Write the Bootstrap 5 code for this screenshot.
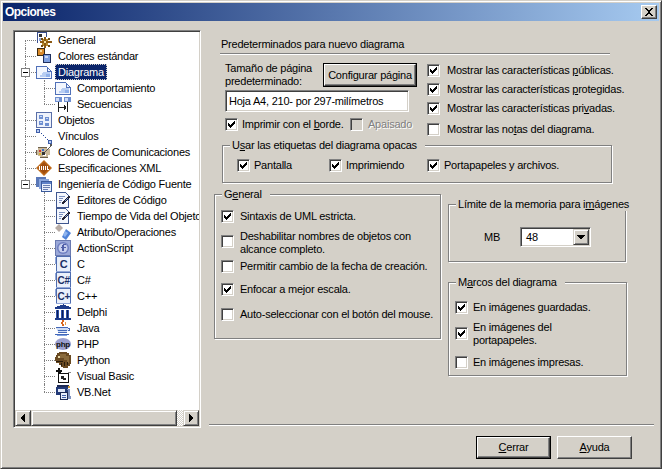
<!DOCTYPE html>
<html lang="es">
<head>
<meta charset="UTF-8" />
<title>Opciones</title>
<link href="https://cdn.jsdelivr.net/npm/bootstrap@5.3.0/dist/css/bootstrap.min.css" rel="stylesheet" />
<style>
  html, body { margin: 0; background: #d4d0c8; }
  body { font: 11px/13px "Liberation Sans", Arial, sans-serif; letter-spacing: -0.22px; color: #000; width: 662px; height: 469px; overflow: hidden; }
  u { text-underline-offset: 1px; }
  .dlg { width: 662px; height: 469px; background: #d4d0c8; border: 1px solid; border-color: #d4d0c8 #404040 #404040 #d4d0c8; box-shadow: inset 1px 1px 0 #fff, inset -1px -1px 0 #808080; padding: 2px; }
  .caption { height: 18px; background: linear-gradient(90deg, #0a246a, #a6caf0); color: #fff; font-weight: 700; font-size: 12px; letter-spacing: -0.55px; padding: 0 2px; }
  .close-x { width: 16px; height: 14px; padding: 0; background: #d4d0c8; border: 1px solid; border-color: #fff #404040 #404040 #fff; box-shadow: inset -1px -1px 0 #808080; line-height: 0; }

  .tree-box { width: 188px; height: 398px; margin: 9px 0 0 10px; background: #fff; border: 1px solid; border-color: #808080 #fff #fff #808080; box-shadow: inset 1px 1px 0 #404040, inset -1px -1px 0 #d4d0c8; padding: 1px; flex: none; }
  .tree-view { height: 378px; overflow: hidden; }
  .tree, .tree ul { list-style: none; margin: 0; padding: 0; }
  .tree li { position: relative; }
  .tree > li { padding-left: 21px; }
  .tree ul li { padding-left: 19px; }
  .tree > li::before, .tree ul li::before { content: ""; position: absolute; top: 0; bottom: 0; border-left: 1px dotted #808080; }
  .tree > li::before { left: 10px; }
  .tree ul li::before { left: 8px; }
  .tree > li:first-child::before { top: 8px; }
  .tree > li:last-child::before, .tree ul li:last-child::before { bottom: auto; height: 8px; }
  .node { height: 16px; display: flex; align-items: center; white-space: nowrap; position: relative; }
  .node::before { content: ""; position: absolute; top: 8px; left: -11px; width: 11px; border-top: 1px dotted #808080; }
  .tree-sign { position: absolute; left: -15px; top: 4px; width: 9px; height: 9px; background: #fff; border: 1px solid #808080; z-index: 1; }
  .tree-sign::after { content: ""; position: absolute; left: 1px; top: 3px; width: 5px; height: 1px; background: #000; }
  .ico { width: 16px; height: 16px; flex: none; shape-rendering: crispEdges; }
  .node-text { margin-left: 3px; padding: 1px 3px; line-height: 14px; }
  .node-text.sel { background: #0a246a; color: #fff; outline: 1px dotted #d4d0c8; outline-offset: -1px; }

  .hbar { height: 16px; }
  .sb-btn { width: 16px; height: 16px; padding: 0; flex: none; background: #d4d0c8; border: 1px solid; border-color: #d4d0c8 #404040 #404040 #d4d0c8; box-shadow: inset 1px 1px 0 #fff, inset -1px -1px 0 #808080; line-height: 0; }
  .sb-thumb { width: 146px; flex: none; }
  .sb-track { flex: 1; background: repeating-conic-gradient(#fff 0 25%, #d4d0c8 0 50%) 0 0 / 2px 2px; }

  .pane { width: 440px; margin-left: 13px; padding-top: 9px; flex: none; }
  .pane-head { margin: 7px 0 0 7px; height: 14px; line-height: 14px; }
  .etch { height: 2px; border-top: 1px solid #808080; border-bottom: 1px solid #fff; }
  .head-line { margin: 2px 0 0 6px; width: 390px; }
  .top-part { height: 90px; }
  .page-col { width: 192px; margin: 7px 0 0 11px; }
  .win-btn { background: #d4d0c8; color: #000; font: inherit; letter-spacing: inherit; padding: 0; border: 1px solid; border-color: #fff #404040 #404040 #fff; box-shadow: inset -1px -1px 0 #808080; border-radius: 0; }
  .win-btn.is-default { outline: 1px solid #000; }
  .setup-btn { width: 92px; height: 22px; margin: 2px 1px 0 0; }
  .page-input { width: 184px; height: 22px; margin-top: 2px; padding: 2px 3px; font: inherit; letter-spacing: inherit; color: #000; border-radius: 0; border: 1px solid; border-color: #808080 #fff #fff #808080; box-shadow: inset 1px 1px 0 #404040, inset -1px -1px 0 #d4d0c8; background: #fff; }
  .show-col { margin: 8px 0 0 10px; }
  .show-col .form-check-input.box { margin-right: 7px; }
  .grp-general .form-check-input.box { margin-right: 6px; }
  .grp-opaque .form-check-input.box, .print-row .chk:first-child .form-check-input.box { margin-right: 4px; }
  .chk { height: 14px; white-space: nowrap; }
  .chk.two { height: 26px; white-space: normal; }
  .form-check-input.box { float: none; width: 13px; height: 13px; margin: 0 5px 0 0; flex: none; border-radius: 0; background-color: #fff; border: 1px solid; border-color: #808080 #fff #fff #808080; box-shadow: inset 1px 1px 0 #404040, inset -1px -1px 0 #d4d0c8; }
  .form-check-input.box:checked { background-color: #fff; background-size: 13px 13px; background-image: url("data:image/svg+xml,%3Csvg xmlns='http://www.w3.org/2000/svg' viewBox='0 0 13 13' shape-rendering='crispEdges'%3E%3Cpath d='M3 5h1v3H3zM4 6h1v3H4zM5 7h1v3H5zM6 6h1v3H6zM7 5h1v3H7zM8 4h1v3H8zM9 3h1v3H9z' fill='%23000'/%3E%3C/svg%3E"); }
  .form-check-input.box:disabled { opacity: 1; background-color: #d4d0c8; }
  .form-check-input.box:focus { outline: 0; }
  .chk.two .form-check-input.box { margin-top: 5px; }
  .grp-frames .chk.two .form-check-input.box { margin-top: 6px; }
  .off-text { color: #808080; text-shadow: 1px 1px 0 #fff; }
  .print-row { margin-top: 5px; }
  .print-row .chk:first-child { width: 125px; }
  .sp-3 { margin-top: 3px; }
  .sp-5 { margin-top: 5px; }
  .sp-7 { margin-top: 7px; }
  .sp-8 { margin-top: 8px; }
  .sp-9 { margin-top: 9px; }
  .sp-11 { margin-top: 11px; }

  .grp { position: relative; border: 1px solid #808080; box-shadow: 1px 1px 0 #fff, inset 1px 1px 0 #fff; }
  .grp-title { position: absolute; top: -7px; left: 7px; background: #d4d0c8; padding: 0 8px 0 2px; line-height: 13px; white-space: nowrap; }
  .grp-opaque { width: 390px; height: 38px; margin-left: 8px; padding: 12px 0 0 14px; }
  .grp-opaque .slot { width: 92px; }
  .grp-opaque .slot2 { width: 98px; }
  .low-part { margin-top: 11px; height: 230px; }
  .grp-general { width: 227px; height: 145px; padding: 14px 0 0 6px; flex: none; }
  .side-col { width: 179px; margin: 10px 0 0 7px; flex: none; }
  .grp-memory { width: 178px; height: 58px; }
  .mb-label { width: 71px; padding-left: 35px; }
  .mem-row { height: 20px; margin-top: 22px; }
  .combo { width: 71px; height: 20px; background: #fff; border: 1px solid; border-color: #808080 #fff #fff #808080; box-shadow: inset 1px 1px 0 #404040, inset -1px -1px 0 #d4d0c8; padding: 1px; }
  .combo-text { flex: 1; padding: 2px 0 0 4px; }
  .grp-frames { width: 179px; height: 94px; margin-top: 20px; padding: 17px 0 0 6px; }
  .bottom-line { width: 445px; margin: 0 0 0 -5px; }
  .foot { margin-top: 10px; padding-right: 22px; gap: 6px; }
  .foot .win-btn { width: 75px; height: 23px; }
  .foot .win-btn.is-default { width: 73px; height: 21px; margin: 1px; }
</style>
</head>
<body>
<svg width="0" height="0" class="position-absolute">
  <defs>
    <symbol id="i-page" viewBox="0 0 16 16">
      <path d="M1 3h10l4 4v7H1z" fill="#f2f6fe"/><path d="M7 8h7v5H4v-2h2V9h1z" fill="#b7cdf3"/><path d="M10 10h4v3h-4z" fill="#8fb0ea"/>
      <path d="M0 2h11v1H1v11h14V7h1v8H0zM11 3h1v1h-1zM12 4h1v1h-1zM13 5h1v1h-1zM14 6h1v1h-1z" fill="#5070b8"/><path d="M11 3h1v4h3v1h-4z" fill="#5070b8"/>
    </symbol>
    <symbol id="i-general" viewBox="0 0 16 16">
      <path d="M1 0h9v10H1z" fill="#fff"/><path d="M1 0h10v1H2v10H1zM10 1h1v4h-1z" fill="#3a4f8f"/><path d="M3 2h3v3H3z" fill="#333"/><path d="M3 6h2v3H3z" fill="#8aa0d8"/>
      <path d="M6 7h6v7H6z" fill="#b78a2e"/><path d="M8 5h2v11H8zM4 9h12v2H4z" fill="#8c5a14"/><path d="M8 9h2v2H8z" fill="#f5e6a8"/><path d="M5 6h2v2H5zM12 6h2v2h-2zM5 13h2v2H5zM12 13h2v2h-2z" fill="#6e4a10"/>
    </symbol>
    <symbol id="i-colors" viewBox="0 0 16 16">
      <path d="M1 0h8v8H1z" fill="#3b2a12"/><path d="M2 1h6v6H2z" fill="#d98a2a"/><path d="M4 2h2v2H4z" fill="#f6d9a0"/>
      <path d="M7 6h8v9H7z" fill="#1f2f5c"/><path d="M8 7h6v7H8z" fill="#7d9fe0"/><path d="M9 8h3v2H9z" fill="#c7d8f7"/>
    </symbol>
    <symbol id="i-seq" viewBox="0 0 16 16">
      <path d="M0 1h7v5H0zM9 1h7v5H9z" fill="#6f8fd0"/><path d="M1 2h3v3H1zM10 2h3v3h-3z" fill="#cfdcf6"/>
      <path d="M3 6h1v10H3zM12 6h1v10h-1zM4 11h7v1H4zM9 9h1v5H9zM10 10h1v3h-1z" fill="#222"/>
    </symbol>
    <symbol id="i-obj" viewBox="0 0 16 16">
      <path d="M0 0h16v16H0z" fill="#5a6fa8"/><path d="M1 1h14v14H1z" fill="#eef2fb"/>
      <path d="M3 3h4v4H3zM9 5h4v4H9zM3 9h4v4H3zM9 11h4v3H9z" fill="#6f8fd0"/><path d="M4 4h2v1H4zM10 6h2v1h-2zM4 10h2v1H4z" fill="#c7d8f7"/>
    </symbol>
    <symbol id="i-link" viewBox="0 0 16 16">
      <path d="M0 1h4v4H0zM12 12h4v4h-4z" fill="#3f5ea8"/><path d="M1 2h2v2H1zM13 13h2v2h-2z" fill="#b8ccf2"/>
      <path d="M5 5h1v1H5zM7 7h1v1H7zM9 9h1v1H9zM11 11h1v1h-1z" fill="#2a4a9a"/>
    </symbol>
    <symbol id="i-palette" viewBox="0 0 16 16">
      <path d="M2 4h9v1h3v6h-2v2H4v-1H2v-1H0V6h2z" fill="#c9b89a"/><path d="M3 6h2v2H3z" fill="#c33"/><path d="M6 5h2v2H6z" fill="#3a6fc8"/><path d="M3 9h2v2H3z" fill="#d8b030"/><path d="M7 10h3v2H7z" fill="#fff"/>
      <path d="M2 3h9v1H2zM0 6h1v5H0zM4 13h8v1H4z" fill="#6d5f4a"/><path d="M14 0h2v2h-1v1h-1v1h-1v1h-1v1h-1v1h-1v1H9V7h1V6h1V5h1V4h1V3h1z" fill="#555"/><path d="M6 8h3v3H6z" fill="#333"/>
    </symbol>
    <symbol id="i-xml" viewBox="0 0 16 16">
      <path d="M8 0l8 8-8 8-8-8z" fill="#c06a1a" shape-rendering="auto"/><path d="M8 2l6 6-6 6-6-6z" fill="#a04e10" shape-rendering="auto"/>
      <path d="M3 6h1v4H3zM5 6h1v4H5zM7 6h1v4H7zM9 6h1v4H9zM11 6h1v4h-1zM12 9h1v1h-1z" fill="#fff"/>
    </symbol>
    <symbol id="i-eng" viewBox="0 0 16 16">
      <path d="M0 1h10v10H0z" fill="#5a78b8"/><path d="M3 3h10v10H3z" fill="#8aa6dc"/><path d="M5 5h11v11H5z" fill="#3a5a9c"/><path d="M6 6h9v9H6z" fill="#eaf0fb"/><path d="M6 6h9v2H6z" fill="#5f82c8"/><path d="M7 9h7v1H7zM7 11h7v1H7zM7 13h5v1H7z" fill="#6a7fb0"/>
    </symbol>
    <symbol id="i-edit" viewBox="0 0 16 16">
      <path d="M1 0h10l3 3v13H1z" fill="#f4f7fd"/><path d="M1 0h10v1H2v14h11V6h1v10H1zM11 1h1v1h-1zM12 2h1v1h-1zM13 3h1v1h-1z" fill="#3f568f"/>
      <path d="M4 4h6v1H4zM4 6h4v1H4zM4 8h3v1H4zM4 10h2v1H4z" fill="#7a8fc0"/><path d="M13 4h2v2h-1v1h-1v1h-1v1h-1v1h-1v1H9v1H7v-2h1V9h1V8h1V7h1V6h1V5h1z" fill="#223"/><path d="M12 6h1v1h-1zM11 7h1v1h-1zM10 8h1v1h-1z" fill="#7d9fe0"/>
    </symbol>
    <symbol id="i-attr" viewBox="0 0 16 16">
      <path d="M4 0l4 4-4 4-4-4z" fill="#b7aca6" shape-rendering="auto"/><path d="M11 5l5 4-5 7-4-3z" fill="#4f82d8" shape-rendering="auto"/><path d="M10 7l3 2-3 4-2-2z" fill="#8fb4ee" shape-rendering="auto"/>
    </symbol>
    <symbol id="i-as" viewBox="0 0 16 16">
      <path d="M1 0h14v16H1z" fill="#9aa8d8"/><path d="M0 0h1v16H0zM15 0h1v16h-1zM0 0h16v1H0zM0 15h16v1H0z" fill="#6a7ab0"/>
      <circle cx="8" cy="8" r="6" fill="#6f7fc0" shape-rendering="auto"/><circle cx="8" cy="8" r="4.5" fill="#c8d0ee" shape-rendering="auto"/>
      <path d="M8 4h3v1H9v2h2v1H9v3H7V8H6V7h1V5h1z" fill="#5060a8"/>
    </symbol>
    <symbol id="i-code" viewBox="0 0 16 16">
      <path d="M1 0h15v16H1z" fill="#4f6db0"/><path d="M2 1h13v14H2z" fill="#eaf0fb"/><path d="M0 1h1v15h15v-1H1z" fill="#93a8d8"/>
    </symbol>
    <symbol id="i-temple" viewBox="0 0 16 16">
      <path d="M8 0h1v1h2v1h3v1h2v2H0V3h2V2h3V1h3z" fill="#1c3a8a"/><path d="M1 6h3v8H1zM6 6h3v8H6zM11 6h3v8h-3z" fill="#2c4fa8"/><path d="M2 6h1v8H2zM7 6h1v8H7zM12 6h1v8h-1z" fill="#0c1e55"/><path d="M0 14h16v2H0z" fill="#1c3a8a"/>
    </symbol>
    <symbol id="i-java" viewBox="0 0 16 16">
      <path d="M7 0h2v2H8v2h1v2H7V4H6V2h1z" fill="#d9661f"/><path d="M10 2h1v3h-1z" fill="#e99a4a"/>
      <path d="M1 7h12v4h-1v2H3v-2H2V9H1z" fill="#cfdcf4"/><path d="M1 7h12v1H1zM3 10h9v1H3zM3 12h9v1H3zM0 14h14v1H0zM13 8h2v3h-2v-1h1V9h-1z" fill="#4468b8"/><path d="M2 15h10v1H2z" fill="#7d9fe0"/>
    </symbol>
    <symbol id="i-php" viewBox="0 0 16 16">
      <ellipse cx="8" cy="8" rx="8" ry="6" fill="#9a9fd0" shape-rendering="auto"/>
    </symbol>
    <symbol id="i-py" viewBox="0 0 16 16">
      <path d="M4 0h8v1h2v2h2v9h-1v2h-2v2H8v-1H6v-2H4v-2H1V9H0V5h1V3h1V1h2z" fill="#6a4a22"/><path d="M5 2h6v2h3v7h-2V8H9V6H5z" fill="#8a6a3a"/><path d="M3 4h2v2H3z" fill="#e8d8a8"/><path d="M1 9h7v1H1zM9 10h1v4H9zM12 10h1v3h-1zM6 11h1v3H6z" fill="#2a1c0c"/>
    </symbol>
    <symbol id="i-vb" viewBox="0 0 16 16">
      <path d="M3 0h2v2h2v2H6v1H3V4H1V2h2z" fill="#111"/><path d="M3 5h11v10H3z" fill="#111"/><path d="M4 6h9v8H4z" fill="#fff"/><path d="M6 8h3v2h2v2H8v-1H6z" fill="#222"/><path d="M13 4h3v1h-3z" fill="#888"/>
    </symbol>
    <symbol id="i-vbn" viewBox="0 0 16 16">
      <path d="M2 1h12v2H2z" fill="#1d2a55"/><path d="M1 3h12v8H1z" fill="#223a78"/><path d="M3 5h7v3H3z" fill="#dfe6f5"/><path d="M5 8h8v8H5z" fill="#1d2a55"/><path d="M6 9h6v6H6z" fill="#e8eefb"/><path d="M7 11h4v1H7zM7 13h4v1H7z" fill="#3f5ea8"/><path d="M12 5h3v7h1v3h-3V6h-1z" fill="#7f92bf"/><path d="M13 2h2v2h-2z" fill="#d9a23a"/>
    </symbol>
  </defs>
</svg>

<div class="dlg d-flex flex-column">
  <div class="caption d-flex align-items-center justify-content-between">
    <span>Opciones</span>
    <button class="close-x" type="button" aria-label="Cerrar">
      <svg width="14" height="12" viewBox="0 0 14 12" shape-rendering="crispEdges"><path d="M3 2h2v1h1v1h2V3h1V2h2v1h-1v1H9v1H8v2h1v1h1v1h1v1H9V9H8V8H6v1H5v1H3V9h1V8h1V7h1V5H5V4H4V3H3z" fill="#000"/></svg>
    </button>
  </div>

  <div class="d-flex">
    <div class="tree-box">
      <div class="tree-view">
        <ul class="tree">
          <li><div class="node"><svg class="ico"><use href="#i-general"/></svg><span class="node-text">General</span></div></li>
          <li><div class="node"><svg class="ico"><use href="#i-colors"/></svg><span class="node-text">Colores estándar</span></div></li>
          <li>
            <div class="node"><span class="tree-sign"></span><svg class="ico"><use href="#i-page"/></svg><span class="node-text sel">Diagrama</span></div>
            <ul>
              <li><div class="node"><svg class="ico"><use href="#i-page"/></svg><span class="node-text">Comportamiento</span></div></li>
              <li><div class="node"><svg class="ico"><use href="#i-seq"/></svg><span class="node-text">Secuencias</span></div></li>
            </ul>
          </li>
          <li><div class="node"><svg class="ico"><use href="#i-obj"/></svg><span class="node-text">Objetos</span></div></li>
          <li><div class="node"><svg class="ico"><use href="#i-link"/></svg><span class="node-text">Vínculos</span></div></li>
          <li><div class="node"><svg class="ico"><use href="#i-palette"/></svg><span class="node-text">Colores de Comunicaciones</span></div></li>
          <li><div class="node"><svg class="ico"><use href="#i-xml"/></svg><span class="node-text">Especificaciones XML</span></div></li>
          <li>
            <div class="node"><span class="tree-sign"></span><svg class="ico"><use href="#i-eng"/></svg><span class="node-text">Ingeniería de Código Fuente</span></div>
            <ul>
              <li><div class="node"><svg class="ico"><use href="#i-edit"/></svg><span class="node-text">Editores de Código</span></div></li>
              <li><div class="node"><svg class="ico"><use href="#i-edit"/></svg><span class="node-text">Tiempo de Vida del Objeto</span></div></li>
              <li><div class="node"><svg class="ico"><use href="#i-attr"/></svg><span class="node-text">Atributo/Operaciones</span></div></li>
              <li><div class="node"><svg class="ico"><use href="#i-as"/></svg><span class="node-text">ActionScript</span></div></li>
              <li><div class="node"><svg class="ico" viewBox="0 0 16 16"><use href="#i-code"/><text x="8.5" y="12" text-anchor="middle" font-family="Liberation Sans" font-weight="700" font-size="11" fill="#1c2f66">C</text></svg><span class="node-text">C</span></div></li>
              <li><div class="node"><svg class="ico" viewBox="0 0 16 16"><use href="#i-code"/><text x="2.5" y="12" font-family="Liberation Sans" font-weight="700" font-size="10" fill="#1c2f66">C#</text></svg><span class="node-text">C#</span></div></li>
              <li><div class="node"><svg class="ico" viewBox="0 0 16 16"><use href="#i-code"/><text x="2.5" y="12" font-family="Liberation Sans" font-weight="700" font-size="10" fill="#1c2f66">C+</text></svg><span class="node-text">C++</span></div></li>
              <li><div class="node"><svg class="ico"><use href="#i-temple"/></svg><span class="node-text">Delphi</span></div></li>
              <li><div class="node"><svg class="ico"><use href="#i-java"/></svg><span class="node-text">Java</span></div></li>
              <li><div class="node"><svg class="ico" viewBox="0 0 16 16"><use href="#i-php"/><text x="8" y="11" text-anchor="middle" font-family="Liberation Sans" font-weight="700" font-size="8" fill="#111">php</text></svg><span class="node-text">PHP</span></div></li>
              <li><div class="node"><svg class="ico"><use href="#i-py"/></svg><span class="node-text">Python</span></div></li>
              <li><div class="node"><svg class="ico"><use href="#i-vb"/></svg><span class="node-text">Visual Basic</span></div></li>
              <li><div class="node"><svg class="ico"><use href="#i-vbn"/></svg><span class="node-text">VB.Net</span></div></li>
            </ul>
          </li>
        </ul>
      </div>
      <div class="hbar d-flex">
        <button class="sb-btn" type="button" aria-label="Izquierda"><svg width="14" height="14" viewBox="0 0 14 14" shape-rendering="crispEdges"><path d="M8 3h1v8H8zM7 4h1v6H7zM6 5h1v4H6zM5 6h1v2H5z" fill="#000"/></svg></button>
        <div class="sb-btn sb-thumb"></div>
        <div class="sb-track"></div>
        <button class="sb-btn" type="button" aria-label="Derecha"><svg width="14" height="14" viewBox="0 0 14 14" shape-rendering="crispEdges"><path d="M5 3h1v8H5zM6 4h1v6H6zM7 5h1v4H7zM8 6h1v2H8z" fill="#000"/></svg></button>
      </div>
    </div>

    <div class="pane">
      <div class="pane-head">Predeterminados para nuevo diagrama</div>
      <div class="etch head-line"></div>

      <div class="top-part d-flex">
        <div class="page-col">
          <div class="d-flex justify-content-between">
            <div>Tamaño de página<br />predeterminado:</div>
            <button class="win-btn is-default setup-btn" type="button">Configurar página</button>
          </div>
          <input class="form-control page-input" type="text" value="Hoja A4, 210- por 297-milímetros" />
          <div class="print-row d-flex">
            <label class="chk d-flex align-items-center"><input class="form-check-input box" type="checkbox" checked /><span>Imprimir con el <u>b</u>orde.</span></label>
            <label class="chk d-flex align-items-center off-text"><input class="form-check-input box" type="checkbox" disabled /><span>Apaisado</span></label>
          </div>
        </div>
        <div class="show-col">
          <label class="chk d-flex align-items-center"><input class="form-check-input box" type="checkbox" checked /><span>Mostrar las características <u>p</u>úblicas.</span></label>
          <label class="chk d-flex align-items-center sp-5"><input class="form-check-input box" type="checkbox" checked /><span>Mostrar las características <u>p</u>rotegidas.</span></label>
          <label class="chk d-flex align-items-center sp-5"><input class="form-check-input box" type="checkbox" checked /><span>Mostrar las características pri<u>v</u>adas.</span></label>
          <label class="chk d-flex align-items-center sp-7"><input class="form-check-input box" type="checkbox" /><span>Mostrar las no<u>t</u>as del diagrama.</span></label>
        </div>
      </div>

      <div class="grp grp-opaque d-flex">
        <span class="grp-title">U<u>s</u>ar las etiquetas del diagrama opacas</span>
        <div class="slot"><label class="chk d-flex align-items-center"><input class="form-check-input box" type="checkbox" checked /><span>Pantalla</span></label></div>
        <div class="slot2"><label class="chk d-flex align-items-center"><input class="form-check-input box" type="checkbox" checked /><span>Imprimiendo</span></label></div>
        <div><label class="chk d-flex align-items-center"><input class="form-check-input box" type="checkbox" checked /><span>Portapapeles y archivos.</span></label></div>
      </div>

      <div class="low-part d-flex">
        <div class="grp grp-general">
          <span class="grp-title">G<u>e</u>neral</span>
          <label class="chk d-flex align-items-center"><input class="form-check-input box" type="checkbox" checked /><span>Sintaxis de UML estricta.</span></label>
          <label class="chk two d-flex align-items-start sp-7"><input class="form-check-input box" type="checkbox" /><span>Deshabilitar nombres de objetos con<br />alcance completo.</span></label>
          <label class="chk d-flex align-items-center sp-3"><input class="form-check-input box" type="checkbox" /><span>Permitir cambio de la fecha de creación.</span></label>
          <label class="chk d-flex align-items-center sp-9"><input class="form-check-input box" type="checkbox" checked /><span>Enfocar a mejor escala.</span></label>
          <label class="chk d-flex align-items-center sp-11"><input class="form-check-input box" type="checkbox" /><span>Auto-seleccionar con el botón del mouse.</span></label>
        </div>
        <div class="side-col">
          <div class="grp grp-memory">
            <span class="grp-title">Límite de la memoria para i<u>m</u>ágenes</span>
            <div class="mem-row d-flex align-items-center">
              <div class="mb-label">MB</div>
              <div class="combo d-flex">
                <span class="combo-text">48</span>
                <button class="sb-btn" type="button" aria-label="Abrir"><svg width="14" height="14" viewBox="0 0 14 14" shape-rendering="crispEdges"><path d="M3 5h8v1H3zM4 6h6v1H4zM5 7h4v1H5zM6 8h2v1H6z" fill="#000"/></svg></button>
              </div>
            </div>
          </div>
          <div class="grp grp-frames">
            <span class="grp-title">M<u>a</u>rcos del diagrama</span>
            <label class="chk d-flex align-items-center"><input class="form-check-input box" type="checkbox" checked /><span>En imágenes guardadas.</span></label>
            <label class="chk two d-flex align-items-start sp-7"><input class="form-check-input box" type="checkbox" checked /><span>En imágenes del<br />portapapeles.</span></label>
            <label class="chk d-flex align-items-center sp-8"><input class="form-check-input box" type="checkbox" /><span>En imágenes impresas.</span></label>
          </div>
        </div>
      </div>

      <div class="etch bottom-line"></div>
      <div class="foot d-flex justify-content-end">
        <button class="win-btn is-default" type="button"><u>C</u>errar</button>
        <button class="win-btn" type="button"><u>A</u>yuda</button>
      </div>
    </div>
  </div>
</div>
<script src="https://cdn.jsdelivr.net/npm/bootstrap@5.3.0/dist/js/bootstrap.bundle.min.js"></script>
</body>
</html>
